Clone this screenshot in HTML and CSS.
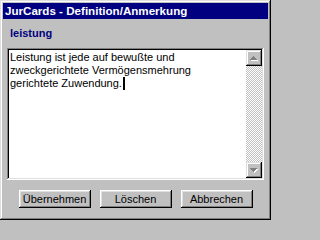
FILE: index.html
```html
<!DOCTYPE html>
<html lang="de">
<head>
<meta charset="utf-8">
<title>JurCards - Definition/Anmerkung</title>
<link rel="stylesheet" href="styles.css">
</head>
<body>
<div class="window">
  <div class="titlebar">JurCards - Definition/Anmerkung</div>
  <div class="content">
    <div class="label">leistung</div>
    <div class="field">
      <div class="text">Leistung ist jede auf bewußte und<br>zweckgerichtete Vermögensmehrung<br>gerichtete Zuwendung.<span class="caret"></span></div>
      <div class="scrollbar">
        <div class="sb-btn">
          <svg width="16" height="16" viewBox="0 0 16 16" shape-rendering="crispEdges">
            <g fill="#fff" transform="translate(1,1)">
              <rect x="7" y="6" width="1" height="1"/><rect x="6" y="7" width="3" height="1"/><rect x="5" y="8" width="5" height="1"/><rect x="4" y="9" width="7" height="1"/>
            </g>
            <g fill="#808080">
              <rect x="7" y="6" width="1" height="1"/><rect x="6" y="7" width="3" height="1"/><rect x="5" y="8" width="5" height="1"/><rect x="4" y="9" width="7" height="1"/>
            </g>
          </svg>
        </div>
        <div class="track"></div>
        <div class="sb-btn">
          <svg width="16" height="16" viewBox="0 0 16 16" shape-rendering="crispEdges">
            <g fill="#fff" transform="translate(1,1)">
              <rect x="4" y="6" width="7" height="1"/><rect x="5" y="7" width="5" height="1"/><rect x="6" y="8" width="3" height="1"/><rect x="7" y="9" width="1" height="1"/>
            </g>
            <g fill="#808080">
              <rect x="4" y="6" width="7" height="1"/><rect x="5" y="7" width="5" height="1"/><rect x="6" y="8" width="3" height="1"/><rect x="7" y="9" width="1" height="1"/>
            </g>
          </svg>
        </div>
      </div>
    </div>
    <div class="buttons">
      <div class="btn">Übernehmen</div>
      <div class="btn">Löschen</div>
      <div class="btn">Abbrechen</div>
    </div>
  </div>
</div>
</body>
</html>
```
FILE: styles.css
```css
html, body {
  margin: 0;
  padding: 0;
  background: #c0c0c0;
}
body {
  width: 271px;
  height: 220px;
  overflow: hidden;
  font-family: "Liberation Sans", Arial, sans-serif;
  font-size: 11px;
  color: #000;
}
.window {
  box-sizing: border-box;
  width: 271px;
  height: 220px;
  padding: 3px;
  background: #c0c0c0;
  box-shadow: inset -1px -1px #000, inset 1px 1px #dfdfdf, inset -2px -2px #808080, inset 2px 2px #fff;
  display: flex;
  flex-direction: column;
}
.titlebar {
  height: 16px;
  line-height: 16px;
  background: #000080;
  color: #fff;
  font-weight: bold;
  font-size: 11.6px;
  padding-left: 2px;
  white-space: nowrap;
}
.content {
  padding: 0 4px;
  display: flex;
  flex-direction: column;
}
.label {
  margin-top: 8px;
  padding-left: 3px;
  height: 13px;
  line-height: 13px;
  font-weight: bold;
  color: #000080;
}
.field {
  margin-top: 8px;
  height: 132px;
  box-sizing: border-box;
  padding: 2px;
  background: #fff;
  box-shadow: inset -1px -1px #fff, inset 1px 1px #808080, inset -2px -2px #dfdfdf, inset 2px 2px #000;
  display: flex;
}
.text {
  flex: 1;
  padding: 1px 1px;
  line-height: 13px;
  white-space: nowrap;
}
.caret {
  display: inline-block;
  width: 2px;
  height: 13px;
  background: #000;
  vertical-align: top;
  margin-left: 1px;
}
.scrollbar {
  width: 16px;
  display: flex;
  flex-direction: column;
}
.sb-btn {
  width: 16px;
  height: 16px;
  background: #c0c0c0;
  box-shadow: inset -1px -1px #000, inset 1px 1px #dfdfdf, inset -2px -2px #808080, inset 2px 2px #fff;
}
.sb-btn svg {
  display: block;
}
.track {
  flex: 1;
  background-color: #fff;
  background-image: conic-gradient(#c0c0c0 0 25%, transparent 0 50%, #c0c0c0 0 75%, transparent 0);
  background-size: 2px 2px;
}
.buttons {
  margin-top: 10px;
  display: flex;
  justify-content: center;
  gap: 9px;
}
.btn {
  width: 72px;
  height: 18px;
  line-height: 18px;
  text-align: center;
  background: #c0c0c0;
  box-shadow: inset -1px -1px #000, inset 1px 1px #fff, inset -2px -2px #808080, inset 2px 2px #dfdfdf;
}
```
